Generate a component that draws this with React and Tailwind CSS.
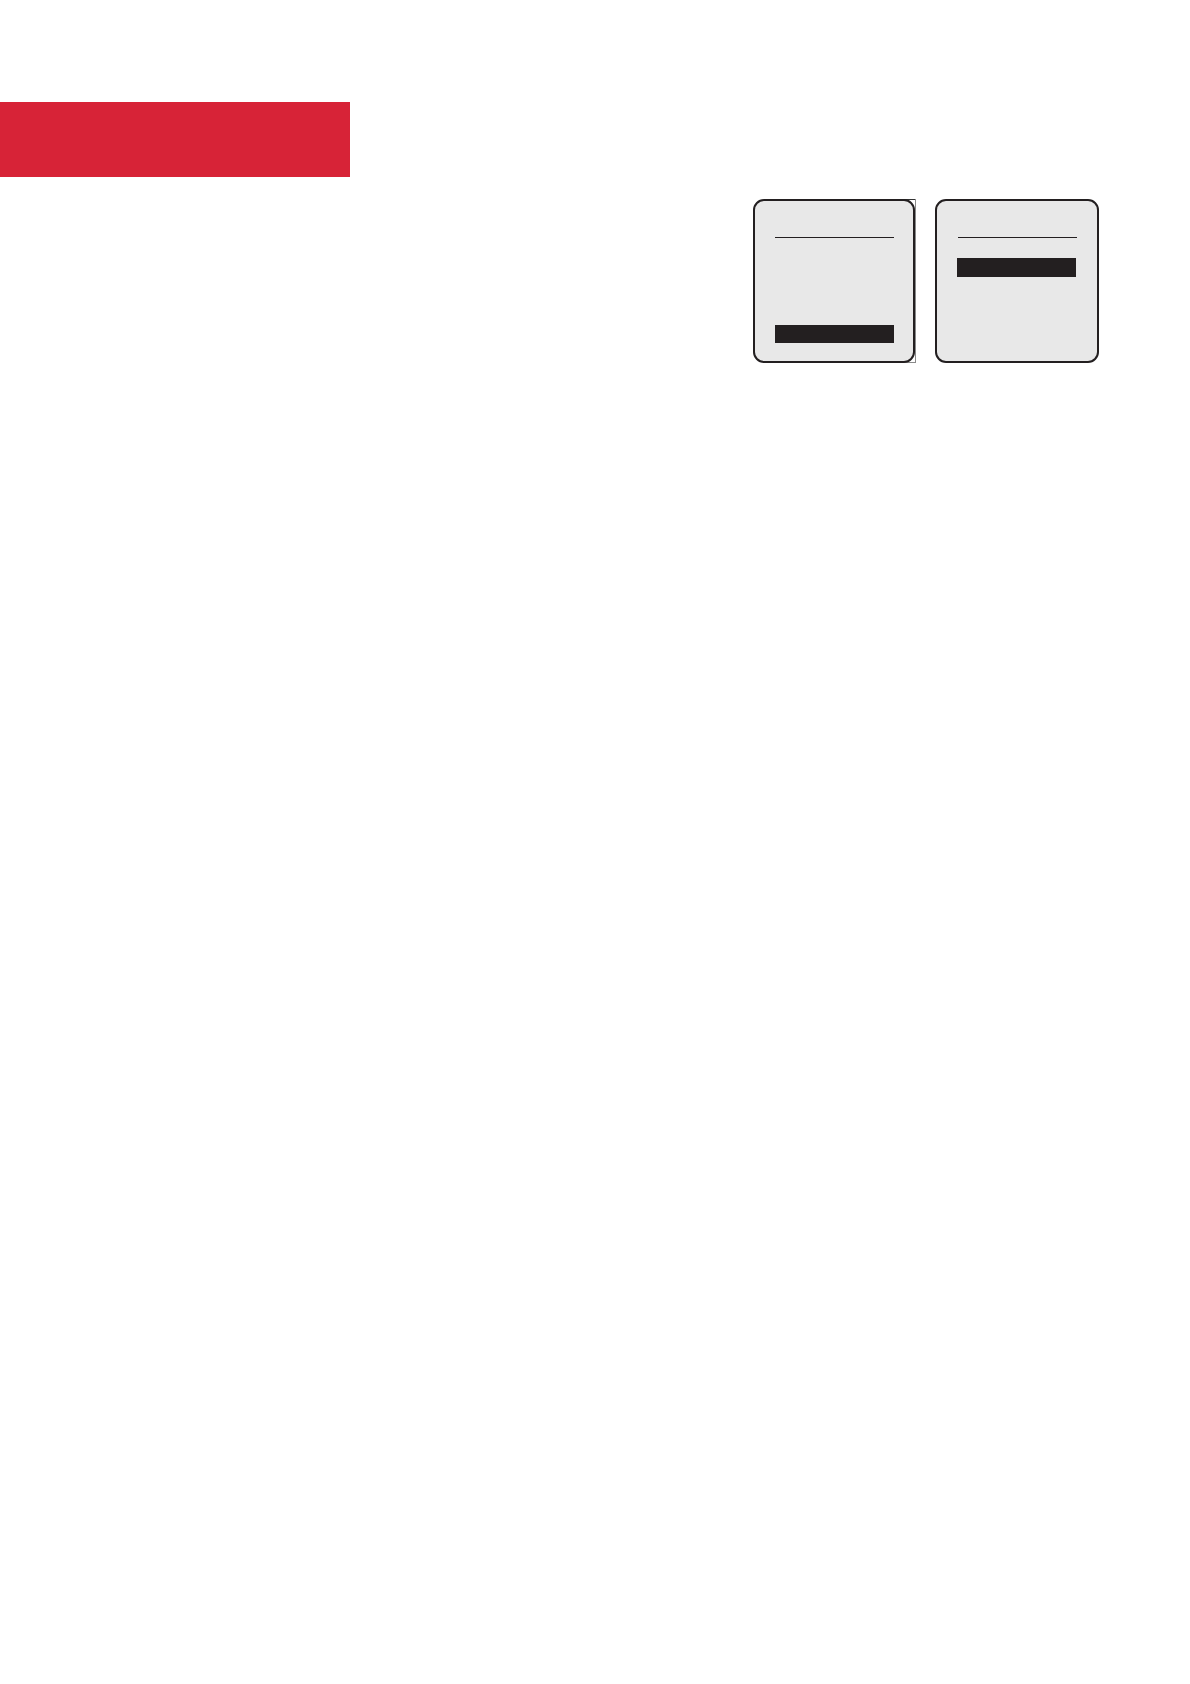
import React from 'react';

function Screen({ className, children }) {
  return (
    <div className={`h-[164px] rounded-[11px] border-2 border-[#231f20] bg-[#e8e8e8] pt-9 ${className}`}>
      {children}
    </div>
  );
}

export default function App() {
  return (
    <main className="min-h-screen bg-white pt-[102px]">
      <header className="h-[75px] w-[350px] bg-[#d72337]" />

      <section className="mt-[22px] flex justify-end gap-[19px] pr-[91px]">
        {/* last row selected, square hairline frame on the right side */}
        <div className="relative w-[163px] border-r border-[#8a8a8a]">
          <span className="absolute right-0 top-0 h-px w-3 bg-[#333333]" />
          <span className="absolute bottom-0 right-0 h-px w-3 bg-[#8a8a8a]" />
          <Screen className="relative w-[162px] px-5">
            <div className="h-px w-[119px] bg-[#231f20]" />
            <div className="mt-[87px] h-[18px] w-[119px] bg-[#231f20]" />
          </Screen>
        </div>

        {/* first row selected */}
        <Screen className="w-[164px] pl-5">
          <div className="ml-px h-px w-[119px] bg-[#231f20]" />
          <div className="mt-5 h-[19px] w-[119px] bg-[#231f20]" />
        </Screen>
      </section>
    </main>
  );
}
